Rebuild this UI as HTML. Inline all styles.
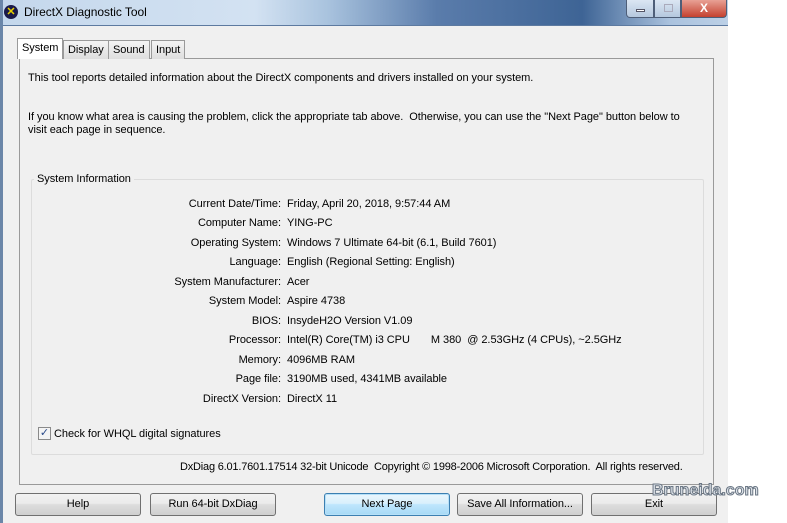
<!DOCTYPE html>
<html><head><style>
*{margin:0;padding:0;box-sizing:border-box}
body{width:787px;height:523px;background:#fff;position:relative;overflow:hidden;font-family:"Liberation Sans",sans-serif;font-size:11px;color:#000;letter-spacing:-0.05px}
.win{position:absolute;left:0;top:0;width:728px;height:523px;background:#f0f0f0}
.edge{position:absolute;left:0;top:0;width:3px;height:523px;background:#6b86a8;z-index:5}
.title{position:absolute;left:0;top:0;width:728px;height:26px;background:linear-gradient(90deg,#c4d7ec 0,#d3e2f2 35%,#a9c3de 45%,#5a7cab 60%,#3e6495 80%,#aac2de 92%,#bcd0e6 100%);border-bottom:1px solid #5d7aa0}
.title span{position:absolute;left:24px;top:5px;font-size:12px;color:#000}
.ico{position:absolute;left:4px;top:5px;width:14px;height:14px;border-radius:50%;background:#1a1a4a;color:#e8d000;font-size:11px;font-weight:bold;text-align:center;line-height:14px}
.cap{position:absolute;top:0;height:18px;border:1px solid #4e5e78;border-top:none}
.a{position:absolute;white-space:nowrap}
.tab{position:absolute;top:40px;height:19px;border:1px solid #9a9a9a;border-bottom:none;background:linear-gradient(#f4f4f4,#dedede);padding:3px 4px 0;font-size:11px}
.panel{position:absolute;left:19px;top:58px;width:695px;height:427px;background:#f0f0f0;border:1px solid #9a9a9a}
.grp{position:absolute;left:31px;top:179px;width:673px;height:276px;border:1px solid #dcdcdc;border-radius:2px}
.lbl{position:absolute;right:447px;text-align:right;white-space:nowrap}
.val{position:absolute;left:287px;white-space:nowrap}
.btn{position:absolute;top:493px;height:23px;border:1px solid #707070;border-radius:3px;background:linear-gradient(#f2f2f2 0,#ebebeb 45%,#dddddd 50%,#cfcfcf 100%);text-align:center;line-height:21px;font-size:11px}
</style></head><body>
<div class="win">
<div class="title"><div class="ico">✕</div><span>DirectX Diagnostic Tool</span>
<div class="cap" style="left:626px;width:28px;background:linear-gradient(#dbe6f3,#b5c8de);border-radius:0 0 0 4px"><div style="position:absolute;left:9px;top:9px;width:9px;height:3px;background:#fff;border:1px solid #556"></div></div>
<div class="cap" style="left:654px;width:27px;background:linear-gradient(#dbe6f3,#b5c8de)"><div style="position:absolute;left:9px;top:4px;width:9px;height:8px;border:1px solid #aab"></div></div>
<div class="cap" style="left:681px;width:46px;background:linear-gradient(#e8a195,#c4412f);border-radius:0 0 4px 0;color:#fff;font-weight:bold;font-size:12px;text-align:center;line-height:16px">X</div>
</div>
<div class="panel"></div>
<div class="tab" style="left:17px;top:38px;height:21px;background:#fff;z-index:2">System</div>
<div class="tab" style="left:63px">Display</div>
<div class="tab" style="left:108px">Sound</div>
<div class="tab" style="left:151px">Input</div>
<div class="a" style="left:28px;top:72px">This tool reports detailed information about the DirectX components and drivers installed on your system.</div>
<div class="a" style="left:28px;top:111px">If you know what area is causing the problem, click the appropriate tab above.&nbsp; Otherwise, you can use the "Next Page" button below to</div>
<div class="a" style="left:28px;top:124px">visit each page in sequence.</div>
<div class="grp"></div>
<div class="a" style="left:34px;top:173px;background:#f0f0f0;padding:0 3px">System Information</div>
<div class="lbl" style="top:198px">Current Date/Time:</div><div class="val" style="top:198px">Friday, April 20, 2018, 9:57:44 AM</div>
<div class="lbl" style="top:217px">Computer Name:</div><div class="val" style="top:217px">YING-PC</div>
<div class="lbl" style="top:237px">Operating System:</div><div class="val" style="top:237px">Windows 7 Ultimate 64-bit (6.1, Build 7601)</div>
<div class="lbl" style="top:256px">Language:</div><div class="val" style="top:256px">English (Regional Setting: English)</div>
<div class="lbl" style="top:276px">System Manufacturer:</div><div class="val" style="top:276px">Acer</div>
<div class="lbl" style="top:295px">System Model:</div><div class="val" style="top:295px">Aspire 4738</div>
<div class="lbl" style="top:315px">BIOS:</div><div class="val" style="top:315px">InsydeH2O Version V1.09</div>
<div class="lbl" style="top:334px">Processor:</div><div class="val" style="top:334px">Intel(R) Core(TM) i3 CPU&nbsp;&nbsp;&nbsp;&nbsp;&nbsp;&nbsp; M 380&nbsp; @ 2.53GHz (4 CPUs), ~2.5GHz</div>
<div class="lbl" style="top:354px">Memory:</div><div class="val" style="top:354px">4096MB RAM</div>
<div class="lbl" style="top:373px">Page file:</div><div class="val" style="top:373px">3190MB used, 4341MB available</div>
<div class="lbl" style="top:393px">DirectX Version:</div><div class="val" style="top:393px">DirectX 11</div>
<div class="a" style="left:38px;top:427px;width:13px;height:13px;border:1px solid #8a8a8a;background:#f4f4f4;color:#2a4a8a;font-size:11px;line-height:11px;text-align:center">✓</div>
<div class="a" style="left:54px;top:428px">Check for WHQL digital signatures</div>
<div class="a" style="left:180px;top:461px;letter-spacing:-0.2px">DxDiag 6.01.7601.17514 32-bit Unicode&nbsp; Copyright © 1998-2006 Microsoft Corporation.&nbsp; All rights reserved.</div>
<div class="btn" style="left:15px;width:126px">Help</div>
<div class="btn" style="left:150px;width:126px">Run 64-bit DxDiag</div>
<div class="btn" style="left:324px;width:126px;border-color:#3c7fb1;background:linear-gradient(#eaf6fd,#d9f0fc 45%,#bee6fd 50%,#a7d9f5);box-shadow:inset 0 0 0 1px #b6e0f8">Next Page</div>
<div class="btn" style="left:457px;width:126px">Save All Information...</div>
<div class="btn" style="left:591px;width:126px">Exit</div>
</div>
<div class="edge"></div>
<div class="a" style="left:652px;top:482px;font-size:16px;font-weight:bold;color:#dfe4ea;-webkit-text-stroke:1px #6a7684;letter-spacing:0">Bruneida.com</div>
</body></html>
